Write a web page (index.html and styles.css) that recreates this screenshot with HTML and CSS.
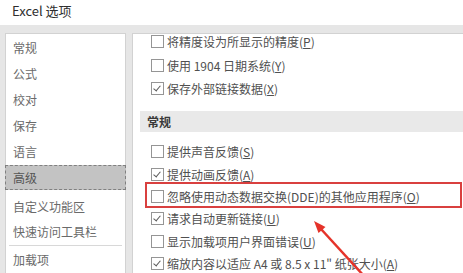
FILE: index.html
```html
<!DOCTYPE html>
<html lang="zh-CN">
  <head>
    <meta charset="UTF-8" />
    <title>Excel 选项</title>
    <link rel="stylesheet" href="styles.css">
  </head>
  <body>
    <div class="titlebar">Excel 选项</div>
    <div class="main">
      <ul class="nav">
        <li class="nav-item">常规</li>
        <li class="nav-item">公式</li>
        <li class="nav-item">校对</li>
        <li class="nav-item">保存</li>
        <li class="nav-item">语言</li>
        <li class="nav-item active">高级</li>
        <li class="nav-item after">自定义功能区</li>
        <li class="nav-item">快速访问工具栏</li>
        <li class="nav-sep"></li>
        <li class="nav-item">加载项</li>
      </ul>

      <div class="panel">
        <div class="rows top">
          <div class="row"><span class="box"></span>将精度设为所显示的精度(<u>P</u>)</div>
          <div class="row"><span class="box"></span>使用 1904 日期系统(<u>Y</u>)</div>
          <div class="row"><span class="box checked"></span>保存外部链接数据(<u>X</u>)</div>
        </div>

        <div class="section">常规</div>

        <div class="rows">
          <div class="row"><span class="box"></span>提供声音反馈(<u>S</u>)</div>
          <div class="row"><span class="box checked"></span>提供动画反馈(<u>A</u>)</div>
          <div class="row marked"><span class="mark"></span><span class="box"></span>忽略使用动态数据交换(DDE)的其他应用程序(<u>O</u>)</div>
          <div class="row"><span class="box checked"></span>请求自动更新链接(<u>U</u>)</div>
          <div class="row"><span class="box"></span>显示加载项用户界面错误(<u>U</u>)</div>
          <div class="row"><span class="box checked"></span>缩放内容以适应 A4 或 8.5 x 11" 纸张大小(<u>A</u>)</div>
        </div>
      </div>
    </div>

    <!-- 标注箭头 -->
    <svg class="arrow" width="463" height="273" viewBox="0 0 463 273">
      <line x1="364" y1="276" x2="321" y2="229" stroke="#e5332a" stroke-width="2.5" />
      <polygon points="314,221 325.5,227 318.5,233" fill="#e5332a" />
    </svg>
  </body>
</html>
```

FILE: styles.css
```css
body {
  margin: 0;
  width: 463px;
  height: 273px;
  overflow: hidden;
  position: relative;
  font-family: "Noto Sans CJK SC", "Noto Sans", sans-serif;
  font-size: 12px;
  color: #555;
  background-color: #fff;
}

.titlebar {
  height: 25px;
  line-height: 22px;
  padding-left: 12px;
  font-size: 13px;
  color: #2e2e2e;
}

.main {
  display: flex;
  gap: 6px;
  height: 248px;
  padding: 8px 0 0 5px;
  box-sizing: border-box;
  background-color: #e6e6e6;
}

.nav {
  list-style: none;
  margin: 0;
  padding: 1px 0 0;
  width: 121px;
  flex-shrink: 0;
  background-color: #fff;
  border: 1px solid #d2d2d2;
  border-bottom: none;
  box-sizing: border-box;
}

.nav-item {
  height: 26px;
  line-height: 26px;
  padding-left: 7px;
  color: #6a6a6a;
  white-space: nowrap;
}

.nav-item.active {
  height: 25px;
  line-height: 23px;
  margin: 0 -1px;
  padding-left: 7px;
  color: #555;
  background-color: #c3c3c3;
  border: 1px dashed #808080;
  box-sizing: border-box;
}

.nav-item.after {
  margin-top: 4px;
}

.nav-item.after,
.nav-item.after + .nav-item {
  height: 25px;
  line-height: 25px;
}

.nav-sep {
  height: 1px;
  margin: 1px 3px 1px 3px;
  background-color: #d8d8d8;
}

.panel {
  flex: 1;
  background-color: #fff;
  border-left: 1px solid #d2d2d2;
  border-top: 1px solid #d2d2d2;
  overflow: hidden;
}

.rows.top {
  margin-top: -4px;
}

.row {
  position: relative;
  display: flex;
  align-items: center;
  height: 22.4px;
  padding-left: 18px;
  white-space: nowrap;
  color: #505050;
}

.rows.top .row {
  height: 23.5px;
}

.box {
  width: 11px;
  height: 11px;
  margin-right: 3px;
  border: 1px solid #959595;
  background-color: #fff;
  flex-shrink: 0;
  position: relative;
}

.box.checked::after {
  content: "";
  position: absolute;
  left: 3px;
  top: 1px;
  width: 3px;
  height: 6px;
  border-right: 1.5px solid #5a5a5a;
  border-bottom: 1.5px solid #5a5a5a;
  transform: rotate(40deg);
}

.section {
  height: 21px;
  line-height: 21px;
  margin: 10px 0 9px 7px;
  padding-left: 7px;
  background-color: #e9e9e9;
  font-weight: bold;
  color: #3a3a3a;
}

.mark {
  position: absolute;
  left: 12px;
  right: 1px;
  top: -3.6px;
  bottom: 0;
  border: 2px solid #d9403f;
}

.arrow {
  position: absolute;
  left: 0;
  top: 0;
}
```
